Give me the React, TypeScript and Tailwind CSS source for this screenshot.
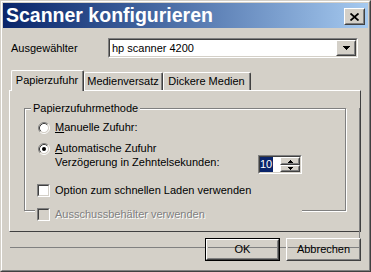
import type { ReactNode } from "react";

type BoxProps = { className?: string; inner?: string; children?: ReactNode };

// classic 3D edges
function Raised({ className = "", inner = "", children }: BoxProps) {
  return (
    <div className={`border border-t-white border-l-white border-r-[#404040] border-b-[#404040] ${className}`}>
      <div className={`h-full w-full border border-t-[#d4d0c8] border-l-[#d4d0c8] border-r-[#808080] border-b-[#808080] flex items-center justify-center ${inner}`}>
        {children}
      </div>
    </div>
  );
}

function Sunken({ className = "", inner = "", children }: BoxProps) {
  return (
    <div className={`border border-t-[#808080] border-l-[#808080] border-r-white border-b-white ${className}`}>
      <div className={`h-full w-full border border-t-[#404040] border-l-[#404040] border-r-[#d4d0c8] border-b-[#d4d0c8] ${inner}`}>
        {children}
      </div>
    </div>
  );
}

function Radio({ checked }: { checked?: boolean }) {
  return (
    <svg width="12" height="12" viewBox="0 0 12 12" className="shrink-0">
      <circle cx="6" cy="6" r="4.2" fill="#fff" />
      <path d="M2.11 9.89A5.5 5.5 0 0 1 9.89 2.11" fill="none" stroke="#808080" />
      <path d="M2.82 9.18A4.5 4.5 0 0 1 9.18 2.82" fill="none" stroke="#404040" />
      <path d="M9.89 2.11A5.5 5.5 0 0 1 2.11 9.89" fill="none" stroke="#fff" />
      <path d="M9.18 2.82A4.5 4.5 0 0 1 2.82 9.18" fill="none" stroke="#d4d0c8" />
      {checked && <circle cx="6" cy="6" r="2" fill="#000" />}
    </svg>
  );
}

function Check({ disabled }: { disabled?: boolean }) {
  return (
    <Sunken
      className="w-[13px] h-[13px] shrink-0"
      inner={disabled ? "bg-[#d4d0c8]" : "bg-white"}
    />
  );
}

function Arrow({ up }: { up?: boolean }) {
  return (
    <svg width="5" height="3" viewBox="0 0 5 3" shapeRendering="crispEdges">
      <polygon points={up ? "2.5,0 5,3 0,3" : "0,0 5,0 2.5,3"} fill="#000" />
    </svg>
  );
}

export default function App() {
  return (
    <div className="w-[371px] h-[272px] bg-[#d4d0c8] text-black text-[11px] leading-[13px] font-['Liberation_Sans',Arial,sans-serif] border border-t-[#d4d0c8] border-l-[#d4d0c8] border-r-[#404040] border-b-[#404040]">
      <div className="h-full border border-t-white border-l-white border-r-[#808080] border-b-[#808080] p-px">
        {/* title bar */}
        <div className="h-[25px] flex items-start justify-between bg-linear-to-r from-[#0a246a] to-[#a6caf0]">
          <span className="pl-[3px] text-[19.5px] leading-[25px] font-bold text-white">Scanner konfigurieren</span>
          <Raised className="w-[21px] h-[17px] mt-[5px] mr-[3px] bg-[#d4d0c8]">
            <svg width="9" height="8" viewBox="0 0 9 8">
              <path d="M0.5 0.5L8.5 7.5M8.5 0.5L0.5 7.5" stroke="#000" strokeWidth="1.8" />
            </svg>
          </Raised>
        </div>

        {/* scanner select */}
        <div className="flex items-center mt-[10px] pl-[8px] h-[20px]">
          <span className="w-[97px]">Ausgewählter</span>
          <Sunken className="w-[250px] h-[20px]" inner="bg-white flex items-center">
            <span className="flex-1 pl-[2px]">hp scanner 4200</span>
            <Raised className="w-[20px] h-full bg-[#d4d0c8]">
              <svg width="7" height="4" viewBox="0 0 7 4" shapeRendering="crispEdges">
                <polygon points="0,0 7,0 3.5,4" fill="#000" />
              </svg>
            </Raised>
          </Sunken>
        </div>

        {/* tabs */}
        <div className="mt-[12px] ml-[6px] w-[352px]">
          <div className="relative z-10 flex items-end h-[20px] pl-[2px]">
            <div className="w-[73px] h-[21px] mb-[-1px] bg-[#d4d0c8] rounded-t-[2px] border-t border-l border-r border-t-white border-l-white border-r-[#404040]">
              <div className="h-full border-r border-r-[#808080] flex justify-center pt-[3px]">Papierzufuhr</div>
            </div>
            <div className="w-[79px] h-[18px] rounded-t-[2px] border-t border-l border-r border-t-white border-l-white border-r-[#404040]">
              <div className="h-full border-r border-r-[#808080] flex items-center justify-center">Medienversatz</div>
            </div>
            <div className="w-[88px] h-[18px] rounded-t-[2px] border-t border-l border-r border-t-white border-l-white border-r-[#404040]">
              <div className="h-full border-r border-r-[#808080] flex items-center justify-center">Dickere Medien</div>
            </div>
          </div>

          <div className="h-[142px] border border-t-white border-l-white border-r-[#404040] border-b-[#404040]">
            <div className="h-full border-r border-b border-r-[#808080] border-b-[#808080]">
              {/* group box */}
              <div className="relative ml-[14px] mt-[17px] w-[322px] border border-[#808080] shadow-[inset_1px_1px_0_#fff,1px_1px_0_#fff] pb-[13px]">
                <span className="absolute left-[6px] -top-[7px] px-[2px] bg-[#d4d0c8] leading-[13px]">Papierzufuhrmethode</span>

                <div className="mt-[12px] h-[13px] pl-[13px] flex items-center gap-[5px]">
                  <Radio />
                  <span><span className="underline">M</span>anuelle Zufuhr:</span>
                </div>
                <div className="mt-[8px] h-[13px] pl-[13px] flex items-center gap-[5px]">
                  <Radio checked />
                  <span><span className="underline">A</span>utomatische Zufuhr</span>
                </div>
                <div className="h-[19px] pl-[30px] flex items-start">
                  <span className="w-[203px] mt-[1px]">Verzögerung in Zehntelsekunden:</span>
                  <Sunken className="w-[44px] h-[19px]" inner="bg-white flex items-stretch">
                    <div className="w-[20px] flex items-center">
                      <span className="bg-[#0a246a] text-white h-full flex items-center pr-px">10</span>
                    </div>
                    <div className="ml-auto w-[20px] flex flex-col">
                      <Raised className="h-[8px] bg-[#d4d0c8]"><Arrow up /></Raised>
                      <Raised className="h-[7px] bg-[#d4d0c8]"><Arrow /></Raised>
                    </div>
                  </Sunken>
                </div>
                <div className="mt-[10px] h-[13px] pl-[12px] flex items-center gap-[5px]">
                  <Check />
                  <span>Option zum schnellen Laden verwenden</span>
                </div>
              </div>

              {/* disabled control drawn across the group box edge */}
              <div className="relative -mt-[4px] ml-[25px] w-[267px] h-[15px] bg-[#d4d0c8] flex items-center gap-[5px] pl-[2px]">
                <Check disabled />
                <span className="text-[#808080] [text-shadow:1px_1px_0_#fff]">Ausschussbehälter verwenden</span>
              </div>
            </div>
          </div>
        </div>

        {/* buttons */}
        <div className="mt-[6px] flex justify-end gap-[6px] pr-[7px]">
          <div className="w-[75px] h-[23px] border border-black">
            <Raised className="h-full">OK</Raised>
          </div>
          <Raised className="w-[75px] h-[23px]">Abbrechen</Raised>
        </div>
      </div>
    </div>
  );
}
